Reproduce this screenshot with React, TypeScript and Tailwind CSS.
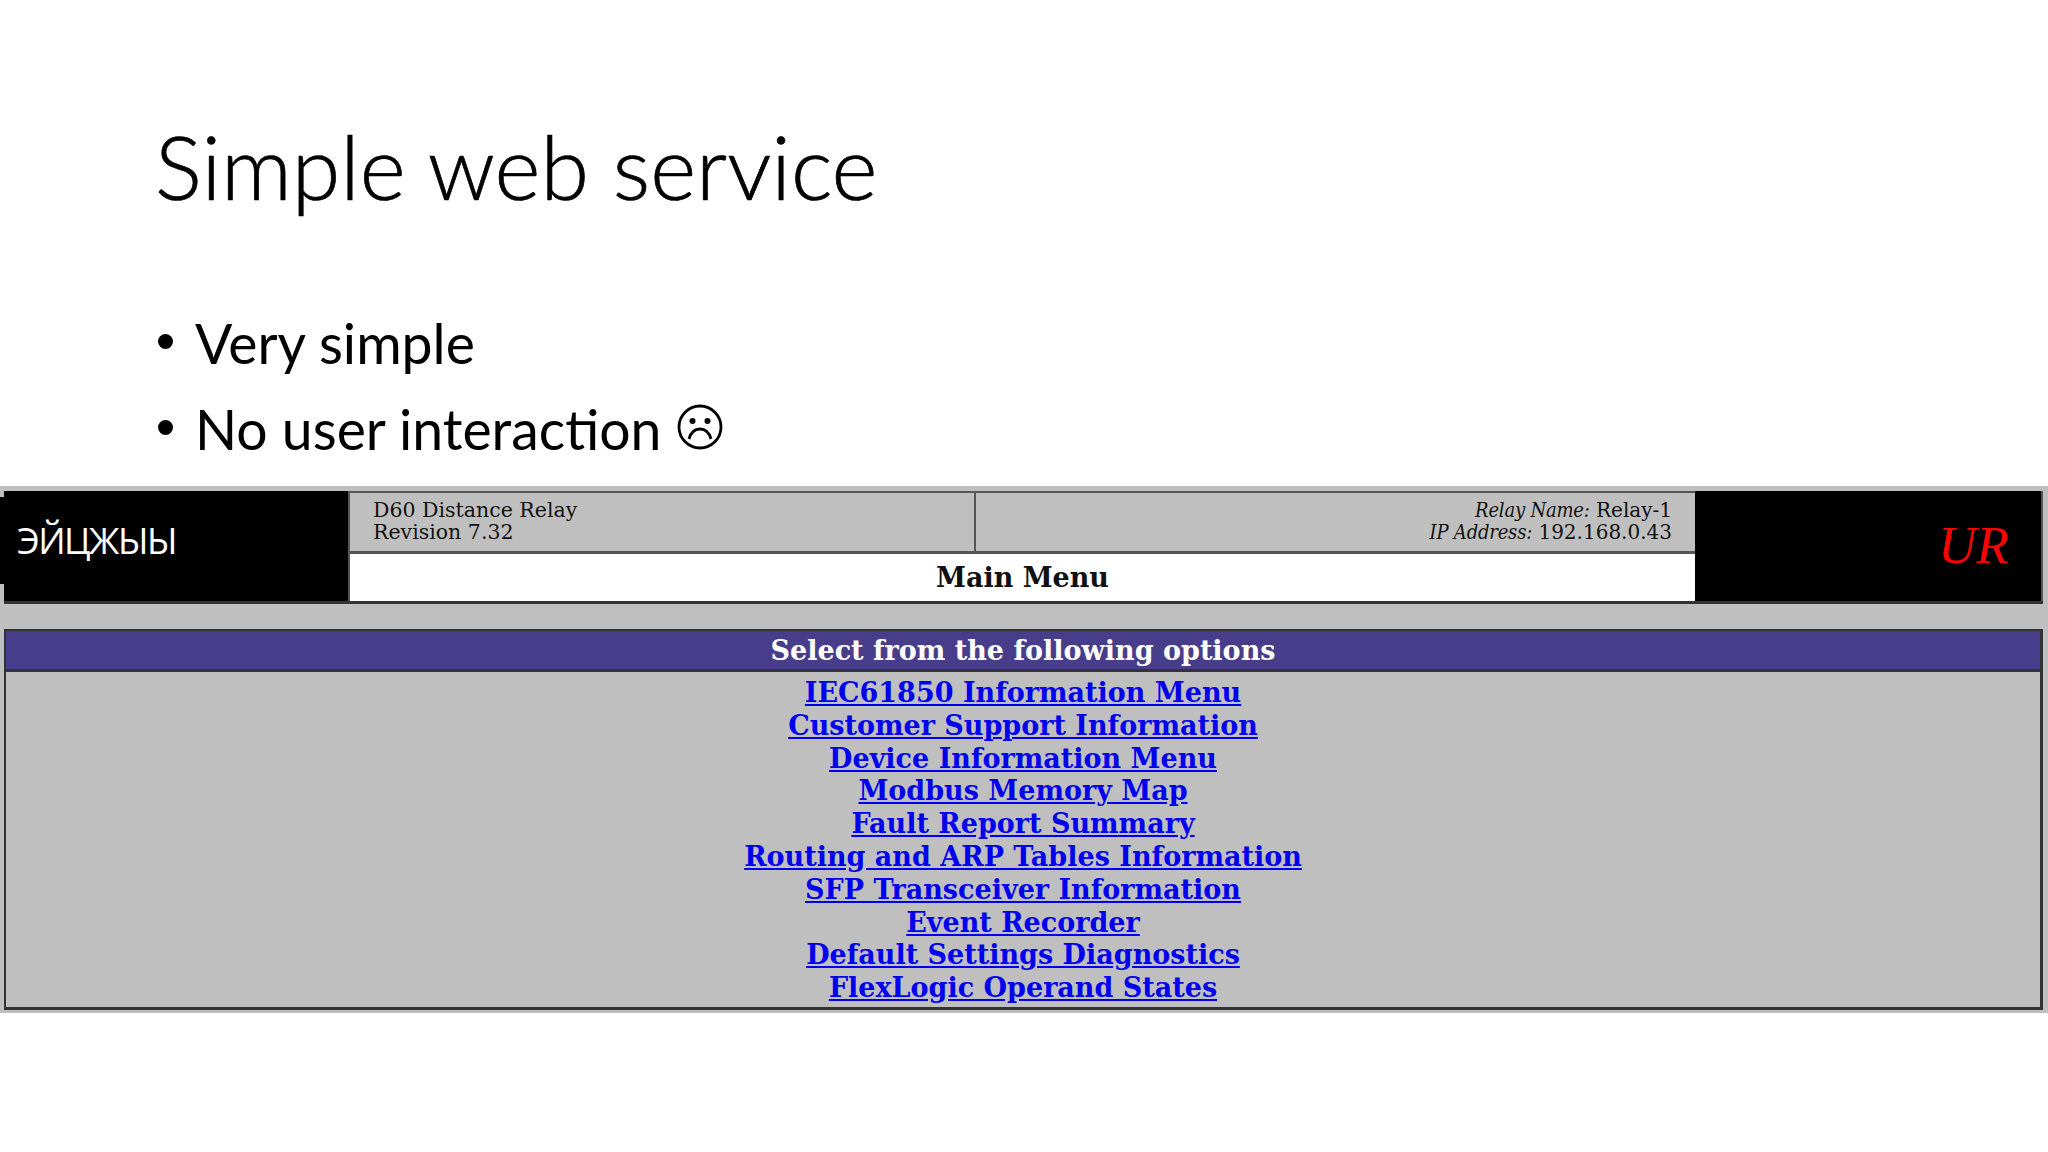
const menuLinks = [
  "IEC61850 Information Menu",
  "Customer Support Information",
  "Device Information Menu",
  "Modbus Memory Map",
  "Fault Report Summary",
  "Routing and ARP Tables Information",
  "SFP Transceiver Information",
  "Event Recorder",
  "Default Settings Diagnostics",
  "FlexLogic Operand States",
];

const serif = "font-['DejaVu_Serif',serif]";
const label = "font-['DejaVu_Serif_Condensed','Liberation_Serif',serif] italic tracking-[-0.2px]";

const Frown = () => (
  <svg viewBox="0 0 46 46" className="w-[46px] h-[46px] ml-[16px] mt-[-4px]" fill="none" stroke="black" strokeWidth="2.8">
    <circle cx="23" cy="23" r="21" />
    <circle cx="15.5" cy="17" r="3" fill="black" stroke="none" />
    <circle cx="30.5" cy="17" r="3" fill="black" stroke="none" />
    <path d="M12 35c2-7 6-10 11-10s9 3 11 10" />
  </svg>
);

const Bullet = () => (
  <span className="w-[40px] shrink-0 pl-[3px]">
    <span className="block w-[15px] h-[15px] rounded-full bg-black mt-[-4px]" />
  </span>
);

export default function App() {
  return (
    <div className="w-[2048px] h-[1152px] bg-white overflow-hidden font-['Lato',sans-serif]">
      <div className="h-[486px] pl-[155px] pt-[120px]">
        <h1 className="text-[88px] leading-[92px] text-black font-light [-webkit-text-stroke:0.7px_black]">Simple web service</h1>
        <ul className="mt-[88px] text-[55.3px] leading-[86px] text-black">
          <li className="flex items-center"><Bullet />Very simple</li>
          <li className="flex items-center"><Bullet />No user interaction<Frown /></li>
        </ul>
      </div>

      <div className={`relative w-full h-[527px] bg-[#bfbfbf] pt-[5px] pl-[4px] pr-[5px] ${serif}`}>
        <div className="absolute left-0 top-[11px] w-[4px] h-[87px] bg-black" />
        <div className="flex h-[113px] border-b-[3px] border-[#333]">
          <div className="w-[344px] bg-black text-white text-[36px] tracking-[-1.5px] font-['Open_Sans',sans-serif] pl-[13px] flex items-center pb-[10px]">ЭЙЦЖЫЫ</div>
          <div className="flex-1 flex flex-col border-l-2 border-[#555]">
            <div className="h-[63px] flex border-t-2 border-b-[3px] border-[#555] text-[20.5px] leading-[21.5px] text-[#111]">
              <div className="w-[626px] pl-[23px] pt-[7px] border-r-2 border-[#555]">
                <div>D60 Distance Relay</div>
                <div>Revision 7.32</div>
              </div>
              <div className="flex-1 pr-[23px] pt-[7px] text-right text-[20px]">
                <div><span className={label}>Relay Name:</span> Relay-1</div>
                <div><span className={label}>IP Address:</span> 192.168.0.43</div>
              </div>
            </div>
            <div className="flex-1 bg-white flex items-center justify-center font-bold text-[27px] text-[#111] pt-[2px]">Main Menu</div>
          </div>
          <div className="w-[348px] bg-black border-r-2 border-[#555] flex items-center justify-end pr-[32px]">
            <span className="text-[#f00] italic text-[53px] font-['Liberation_Serif',serif]">UR</span>
          </div>
        </div>

        <div className="mt-[25px] h-[381px] flex flex-col border-2 border-[#333] border-b-[3px] border-r-[3px]">
          <div className="h-[41px] bg-[#483d8b] border-b-[3px] border-[#333] text-white font-bold text-[27px] flex items-center justify-center pt-[2px]">
            Select from the following options
          </div>
          <div className="flex flex-col items-center pt-[5px]">
            {menuLinks.map((link) => (
              <a key={link} href="#" className="text-[#0000ee] underline font-bold text-[27px] leading-[32.8px]">{link}</a>
            ))}
          </div>
        </div>
      </div>
    </div>
  );
}
